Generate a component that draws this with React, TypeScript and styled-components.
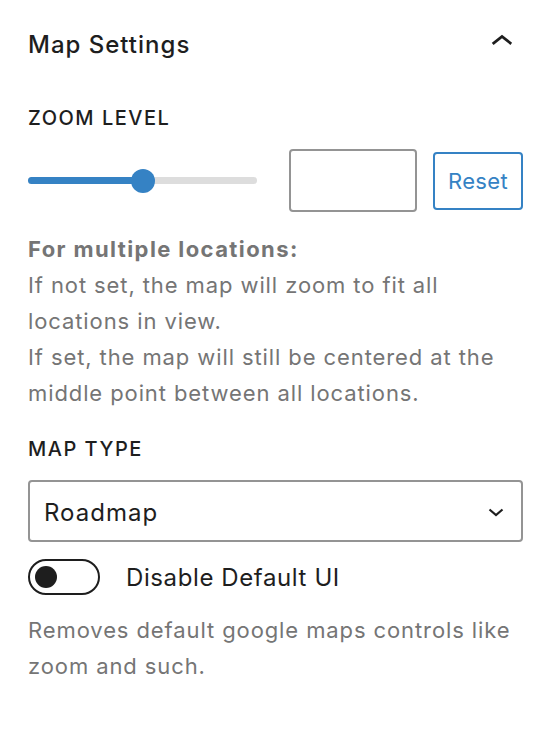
import React from "react";
import styled, { createGlobalStyle } from "styled-components";

const Global = createGlobalStyle`
  html, body { margin: 0; padding: 0; background: #fff; }
  body { font-family: Inter, "Noto Sans", "Liberation Sans", sans-serif; color: #1e1e1e; }
  * { box-sizing: border-box; }
`;

const BLUE = "#3582c4";

const Panel = styled.div`
  width: 554px;
  padding: 0 31px 0 28px;
`;

const Header = styled.div`
  height: 88px;
  display: flex;
  align-items: center;
  justify-content: space-between;
`;

const Title = styled.h2`
  margin: 0;
  font-size: 24px;
  font-weight: 500;
  letter-spacing: 1px;
  color: #1e1e1e;
`;

const Body = styled.div`
  display: flex;
  flex-direction: column;
  padding-top: 16px;
`;

const Label = styled.div<{ $mb: number; $mt?: number }>`
  font-size: 20px;
  line-height: 28px;
  font-weight: 500;
  letter-spacing: 1.5px;
  text-transform: uppercase;
  color: #1e1e1e;
  margin-top: ${(p) => p.$mt ?? 0}px;
  margin-bottom: ${(p) => p.$mb}px;
`;

const RangeRow = styled.div`
  display: flex;
  align-items: center;
  height: 63px;
`;

const Track = styled.div`
  position: relative;
  width: 229px;
  height: 7px;
  border-radius: 4px;
  background: #dddddd;
  margin-right: 32px;
`;

const Fill = styled.div`
  height: 100%;
  border-radius: 4px;
  background: ${BLUE};
`;

const Thumb = styled.div`
  position: absolute;
  top: 50%;
  width: 24px;
  height: 24px;
  margin-left: -12px;
  margin-top: -12px;
  border-radius: 50%;
  background: ${BLUE};
`;

const NumberBox = styled.div`
  width: 128px;
  height: 63px;
  border: 2px solid #949494;
  border-radius: 4px;
  margin-right: 16px;
`;

const ResetButton = styled.button`
  width: 90px;
  height: 58px;
  border: 2px solid ${BLUE};
  border-radius: 4px;
  background: #fff;
  color: ${BLUE};
  font-family: inherit;
  font-size: 22px;
  letter-spacing: 0.3px;
  padding: 0;
`;

const Help = styled.div<{ $mt: number }>`
  margin-top: ${(p) => p.$mt}px;
  font-size: 22px;
  line-height: 36px;
  letter-spacing: 0.9px;
  color: #757575;
`;

const Strong = styled.strong`
  font-weight: 700;
  letter-spacing: 1.4px;
  display: block;
`;

const Select = styled.div`
  height: 62px;
  border: 2px solid #949494;
  border-radius: 4px;
  display: flex;
  align-items: center;
  justify-content: space-between;
  padding: 2px 17px 0 14px;
  font-size: 24px;
  letter-spacing: 1px;
  color: #1e1e1e;
  margin-bottom: 17px;
`;

const ToggleRow = styled.div`
  display: flex;
  align-items: center;
  gap: 26px;
`;

const ToggleTrack = styled.div`
  width: 72px;
  height: 36px;
  border: 2px solid #1e1e1e;
  border-radius: 18px;
  display: flex;
  align-items: center;
  padding-left: 5px;
`;

const Knob = styled.div`
  width: 22px;
  height: 22px;
  border-radius: 50%;
  background: #1e1e1e;
`;

const ToggleLabel = styled.span`
  font-size: 24px;
  letter-spacing: 0.6px;
  color: #1e1e1e;
`;

export default function App() {
  const pct = 50;
  return (
    <>
      <Global />
      <Panel>
        <Header>
          <Title>Map Settings</Title>
          <svg width="44" height="44" viewBox="0 0 24 24" style={{ marginRight: -1, marginTop: -4 }}>
            <path d="M6.5 12.4L12 8l5.5 4.4-.9 1.2L12 10l-4.6 3.6-1-1.2z" fill="#1e1e1e" />
          </svg>
        </Header>
        <Body>
          <Label $mb={17}>Zoom Level</Label>
          <RangeRow>
            <Track>
              <Fill style={{ width: `${pct}%` }} />
              <Thumb style={{ left: `${pct}%` }} />
            </Track>
            <NumberBox />
            <ResetButton>Reset</ResetButton>
          </RangeRow>
          <Help $mt={19}>
            <Strong>For multiple locations:</Strong>
            If not set, the map will zoom to fit all locations in view.
            <br />
            If set, the map will still be centered at the middle point between all locations.
          </Help>
          <Label $mb={17} $mt={24}>Map Type</Label>
          <Select>
            <span>Roadmap</span>
            <svg width="16" height="9" viewBox="0 0 16 9">
              <path d="M1.5 1.5l6.5 5.5 6.5-5.5" fill="none" stroke="#1e1e1e" strokeWidth="2.2" />
            </svg>
          </Select>
          <ToggleRow>
            <ToggleTrack>
              <Knob />
            </ToggleTrack>
            <ToggleLabel>Disable Default UI</ToggleLabel>
          </ToggleRow>
          <Help $mt={17}>Removes default google maps controls like zoom and such.</Help>
        </Body>
      </Panel>
    </>
  );
}
